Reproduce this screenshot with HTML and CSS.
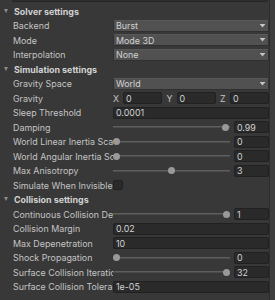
FILE: index.html
```html
<!DOCTYPE html>
<html lang="en">
<head>
  <meta charset="UTF-8">
  <meta name="viewport" content="width=device-width, initial-scale=1.0">
  <title>solver inspector</title>
  <link rel="stylesheet" href="styles.css">
</head>
<body>

  <div class="window">
    <div class="inspector">
      <div class="top-box"></div>

      <div class="foldout"><span class="fold-arrow"></span>Solver settings</div>
      <div class="row">
        <div class="label">Backend</div>
        <div class="dropdown"><span>Burst</span><svg width="5" height="4" viewBox="0 0 5 4"><path d="M0 0h5v1H0z M0.5 1h4L2.5 3.5z"/></svg></div>
      </div>
      <div class="row">
        <div class="label">Mode</div>
        <div class="dropdown"><span>Mode 3D</span><svg width="5" height="4" viewBox="0 0 5 4"><path d="M0 0h5v1H0z M0.5 1h4L2.5 3.5z"/></svg></div>
      </div>
      <div class="row">
        <div class="label">Interpolation</div>
        <div class="dropdown"><span>None</span><svg width="5" height="4" viewBox="0 0 5 4"><path d="M0 0h5v1H0z M0.5 1h4L2.5 3.5z"/></svg></div>
      </div>

      <div class="foldout"><span class="fold-arrow"></span>Simulation settings</div>
      <div class="row">
        <div class="label">Gravity Space</div>
        <div class="dropdown"><span>World</span><svg width="5" height="4" viewBox="0 0 5 4"><path d="M0 0h5v1H0z M0.5 1h4L2.5 3.5z"/></svg></div>
      </div>
      <div class="row">
        <div class="label">Gravity</div>
        <div class="vector">
          <div class="axis"><span class="axis-name">X</span><div class="field">0</div></div>
          <div class="axis"><span class="axis-name">Y</span><div class="field">0</div></div>
          <div class="axis"><span class="axis-name">Z</span><div class="field">0</div></div>
        </div>
      </div>
      <div class="row">
        <div class="label">Sleep Threshold</div>
        <div class="field">0.0001</div>
      </div>
      <div class="row">
        <div class="label">Damping</div>
        <div class="slider">
          <div class="track"><span class="knob" style="--f: 0.99"></span></div>
          <div class="field value">0.99</div>
        </div>
      </div>
      <div class="row">
        <div class="label">World Linear Inertia Scal</div>
        <div class="slider">
          <div class="track"><span class="knob" style="--f: 0"></span></div>
          <div class="field value">0</div>
        </div>
      </div>
      <div class="row">
        <div class="label">World Angular Inertia Sc</div>
        <div class="slider">
          <div class="track"><span class="knob" style="--f: 0"></span></div>
          <div class="field value">0</div>
        </div>
      </div>
      <div class="row">
        <div class="label">Max Anisotropy</div>
        <div class="slider">
          <div class="track"><span class="knob" style="--f: 0.5"></span></div>
          <div class="field value">3</div>
        </div>
      </div>
      <div class="row">
        <div class="label">Simulate When Invisible</div>
        <div class="checkbox"></div>
      </div>

      <div class="foldout"><span class="fold-arrow"></span>Collision settings</div>
      <div class="row">
        <div class="label">Continuous Collision De</div>
        <div class="slider">
          <div class="track"><span class="knob" style="--f: 1"></span></div>
          <div class="field value">1</div>
        </div>
      </div>
      <div class="row">
        <div class="label">Collision Margin</div>
        <div class="field">0.02</div>
      </div>
      <div class="row">
        <div class="label">Max Depenetration</div>
        <div class="field">10</div>
      </div>
      <div class="row">
        <div class="label">Shock Propagation</div>
        <div class="slider">
          <div class="track"><span class="knob" style="--f: 0"></span></div>
          <div class="field value">0</div>
        </div>
      </div>
      <div class="row">
        <div class="label">Surface Collision Iteratio</div>
        <div class="slider">
          <div class="track"><span class="knob" style="--f: 1"></span></div>
          <div class="field value">32</div>
        </div>
      </div>
      <div class="row">
        <div class="label">Surface Collision Tolera</div>
        <div class="field">1e-05</div>
      </div>
    </div>
    <div class="scrollbar"></div>
  </div>

</body>
</html>
```

FILE: styles.css
```css
body {
  margin: 0;
  background: #383838;
  font-family: Inter, "Noto Sans", sans-serif;
  font-size: 8.9px;
  color: #c4c4c4;
  overflow: hidden;
}

.window {
  display: flex;
  width: 275px;
  height: 300px;
}

.inspector {
  width: 269px;
  display: flex;
  flex-direction: column;
}

.scrollbar {
  flex: 1;
  border-left: 1px solid #2c2c2c;
  background: #3e3e3e;
}

.top-box {
  height: 3px;
  margin: -3px 1px 1.75px 12px;
  background: #2f2f2f;
  border: 1px solid #252525;
  border-radius: 2px;
}

.foldout {
  height: 14.5px;
  display: flex;
  align-items: center;
  padding-left: 14px;
  position: relative;
  font-weight: 700;
  color: #d2d2d2;
}

.fold-arrow {
  position: absolute;
  left: 4px;
  top: 5px;
  border-left: 2px solid transparent;
  border-right: 2px solid transparent;
  border-top: 4px solid #8a8a8a;
}

.row {
  height: 14.5px;
  display: flex;
  align-items: center;
  padding-left: 13px;
}

.label {
  width: 100px;
  flex: none;
  white-space: nowrap;
  overflow: hidden;
}

.dropdown {
  flex: 1;
  height: 12px;
  box-sizing: border-box;
  display: flex;
  align-items: center;
  justify-content: space-between;
  padding: 0 3px 0 2px;
  background: #515151;
  border: 1px solid #303030;
  border-top-color: #585858;
  border-radius: 2px;
  color: #d2d2d2;
}

.dropdown svg {
  fill: #c4c4c4;
}

.field {
  flex: 1;
  min-width: 0;
  height: 12px;
  box-sizing: border-box;
  display: flex;
  align-items: center;
  padding-left: 2px;
  background: #2a2a2a;
  border: 1px solid #212121;
  border-radius: 2px;
  color: #d2d2d2;
}

.vector {
  flex: 1;
  display: flex;
  gap: 4.5px;
}

.axis {
  flex: 1;
  display: flex;
  align-items: center;
}

.axis-name {
  width: 10px;
  flex: none;
}

.slider {
  flex: 1;
  display: flex;
  align-items: center;
  height: 100%;
}

.track {
  flex: 1;
  height: 100%;
  position: relative;
  background: linear-gradient(#5e5e5e, #5e5e5e) no-repeat 0 50% / 100% 1.5px;
}

.knob {
  position: absolute;
  top: 50%;
  left: calc(var(--f) * (100% - 7px));
  width: 7px;
  height: 7px;
  margin-top: -3.5px;
  border-radius: 50%;
  background: #999999;
}

.field.value {
  flex: none;
  width: 35px;
  margin-left: 4px;
}

.checkbox {
  width: 10px;
  height: 10px;
  box-sizing: border-box;
  background: #2a2a2a;
  border: 1px solid #212121;
  border-radius: 2px;
}
```
